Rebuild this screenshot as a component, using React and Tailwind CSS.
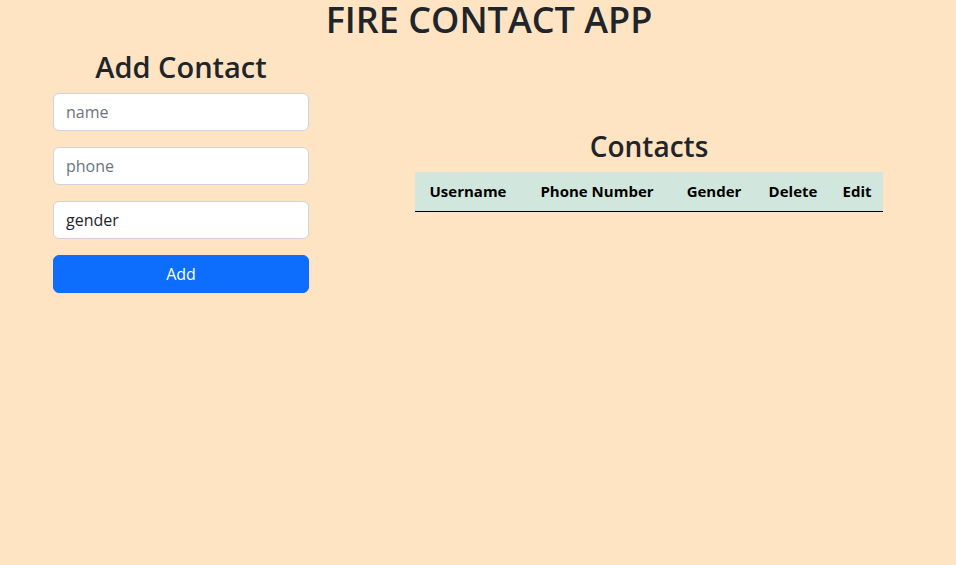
export default function App() {
  return (
    <div className="min-h-screen w-full bg-[#ffe4c4] text-[#212529] font-['Open_Sans',sans-serif]">
      <h1 className="pl-[22px] text-center text-[36px] font-semibold leading-[40px]">FIRE CONTACT APP</h1>
      <div className="flex items-start">
        <div className="ml-[53px] flex w-[256px] flex-col">
          <h2 className="mt-[10px] mb-[8px] text-center text-[29px] font-semibold leading-[1.2]">Add Contact</h2>
          <input
            placeholder="name"
            className="h-[38px] rounded-md border border-[#ced4da] bg-white px-3 text-base placeholder:text-[#6c757d]"
          />
          <input
            placeholder="phone"
            className="mt-4 h-[38px] rounded-md border border-[#ced4da] bg-white px-3 text-base placeholder:text-[#6c757d]"
          />
          <input
            defaultValue="gender"
            className="mt-4 h-[38px] rounded-md border border-[#ced4da] bg-white px-3 text-base"
          />
          <button className="mt-4 h-[38px] rounded-md border border-[#0d6efd] bg-[#0d6efd] text-base text-white">
            Add
          </button>
        </div>
        <div className="ml-[106px] mt-[90px] w-[468px]">
          <h2 className="mb-[8px] text-center text-[28px] font-semibold leading-[1.2]">Contacts</h2>
          <table className="w-full table-fixed border-collapse">
            <thead>
              <tr className="border-b border-black bg-[#d1e7dd] text-[15px] font-bold text-black">
                <th className="h-[40px] w-[106px]">Username</th>
                <th className="w-[152px]">Phone Number</th>
                <th className="w-[82px]">Gender</th>
                <th className="w-[76px]">Delete</th>
                <th className="w-[52px]">Edit</th>
              </tr>
            </thead>
          </table>
        </div>
      </div>
    </div>
  );
}
